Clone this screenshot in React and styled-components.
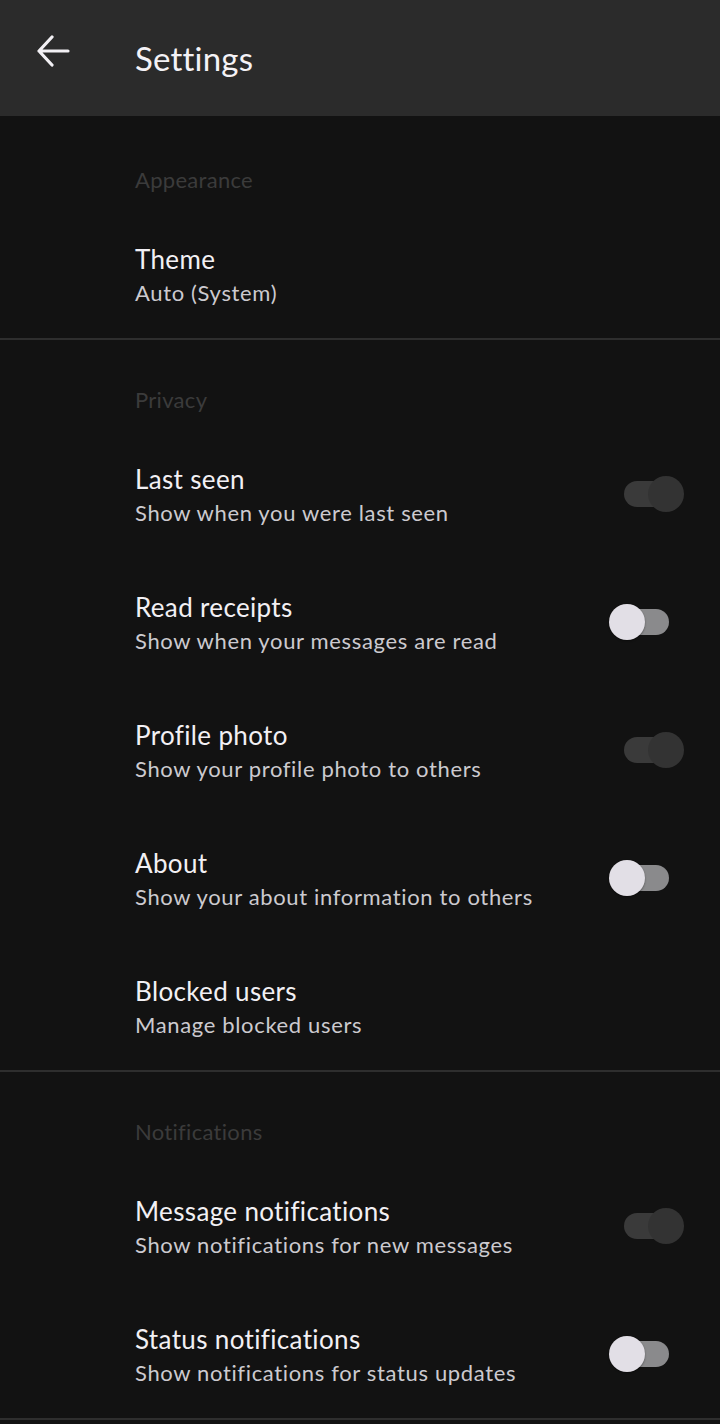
import styled, { createGlobalStyle } from 'styled-components';

const GlobalStyle = createGlobalStyle`
  html, body {
    margin: 0;
    padding: 0;
    background: #121212;
  }
  body {
    font-family: 'Lato', 'Noto Sans', sans-serif;
    -webkit-font-smoothing: antialiased;
  }
`;

const sections = [
  {
    title: 'Appearance',
    items: [{ label: 'Theme', hint: 'Auto (System)' }]
  },
  {
    title: 'Privacy',
    items: [
      { label: 'Last seen', hint: 'Show when you were last seen', toggle: 'on' },
      { label: 'Read receipts', hint: 'Show when your messages are read', toggle: 'off' },
      { label: 'Profile photo', hint: 'Show your profile photo to others', toggle: 'on' },
      { label: 'About', hint: 'Show your about information to others', toggle: 'off' },
      { label: 'Blocked users', hint: 'Manage blocked users' }
    ]
  },
  {
    title: 'Notifications',
    items: [
      { label: 'Message notifications', hint: 'Show notifications for new messages', toggle: 'on' },
      { label: 'Status notifications', hint: 'Show notifications for status updates', toggle: 'off' }
    ]
  }
];

function BackArrow() {
  return (
    <svg width="34" height="32" viewBox="0 0 34 32" fill="none">
      <path
        d="M32 16H3M16 2L3 16l13 14"
        stroke="#f2f0f4"
        strokeWidth="3.2"
        strokeLinecap="round"
        strokeLinejoin="round"
      />
    </svg>
  );
}

function Switch({ checked }) {
  return (
    <SwitchBox $checked={checked}>
      <Track $checked={checked} />
      <Thumb $checked={checked} />
    </SwitchBox>
  );
}

function SettingRow({ label, hint, toggle }) {
  return (
    <Row>
      <RowText>
        <RowLabel>{label}</RowLabel>
        <RowHint>{hint}</RowHint>
      </RowText>
      {toggle && <Switch checked={toggle === 'on'} />}
    </Row>
  );
}

export default function App() {
  return (
    <Page>
      <GlobalStyle />
      <Header>
        <BackButton>
          <BackArrow />
        </BackButton>
        <HeaderTitle>Settings</HeaderTitle>
      </Header>
      {sections.map((section) => (
        <Section key={section.title}>
          <SectionTitle>{section.title}</SectionTitle>
          <RowList>
            {section.items.map((item) => (
              <SettingRow key={item.label} {...item} />
            ))}
          </RowList>
        </Section>
      ))}
    </Page>
  );
}

const Page = styled.div`
  width: 720px;
  min-height: 1424px;
  background: #121212;
  overflow: hidden;
`;

const Header = styled.header`
  height: 116px;
  display: flex;
  align-items: center;
  background: #2b2b2b;
  box-sizing: border-box;
`;

const BackButton = styled.div`
  width: 135px;
  display: flex;
  padding-left: 36px;
  padding-bottom: 14px;
  box-sizing: border-box;
`;

const HeaderTitle = styled.h1`
  margin: 0;
  font-size: 33px;
  font-weight: 400;
  color: #f4f2f6;
  letter-spacing: 0.2px;
`;

const Section = styled.section`
  border-bottom: 2px solid #2e2e2e;
  padding: 46px 0 28px 135px;

  &:first-of-type {
    padding-top: 50px;
  }
`;

const SectionTitle = styled.div`
  font-size: 22px;
  line-height: 28px;
  color: #3b3b3b;
  letter-spacing: 0.3px;
  margin-bottom: 48px;
`;

const RowList = styled.div`
  display: flex;
  flex-direction: column;
  gap: 60px;
`;

const Row = styled.div`
  display: flex;
  align-items: center;
  justify-content: space-between;
  padding-right: 36px;
  height: 68px;
`;

const RowText = styled.div`
  display: flex;
  flex-direction: column;
`;

const RowLabel = styled.div`
  font-size: 26px;
  line-height: 34px;
  color: #f2f0f4;
  letter-spacing: 0.35px;
`;

const RowHint = styled.div`
  font-size: 22px;
  line-height: 34px;
  color: #cccacf;
  letter-spacing: 0.65px;
`;

const SwitchBox = styled.div`
  position: relative;
  width: 62px;
  height: 36px;
  margin-bottom: 5px;
  margin-right: ${({ $checked }) => ($checked ? '0' : '15px')};
`;

const Track = styled.div`
  position: absolute;
  top: 5px;
  left: ${({ $checked }) => ($checked ? '2px' : '4px')};
  right: ${({ $checked }) => ($checked ? '10px' : '0')};
  height: 26px;
  border-radius: 13px;
  background: ${({ $checked }) => ($checked ? '#3a3a3a' : '#8a8a8c')};
`;

const Thumb = styled.div`
  position: absolute;
  top: 0;
  left: ${({ $checked }) => ($checked ? '26px' : '2px')};
  width: 36px;
  height: 36px;
  border-radius: 50%;
  background: ${({ $checked }) => ($checked ? '#333333' : '#e2dfe6')};
  box-shadow: ${({ $checked }) => ($checked ? 'none' : '0 1px 2px rgba(0,0,0,0.4)')};
`;
